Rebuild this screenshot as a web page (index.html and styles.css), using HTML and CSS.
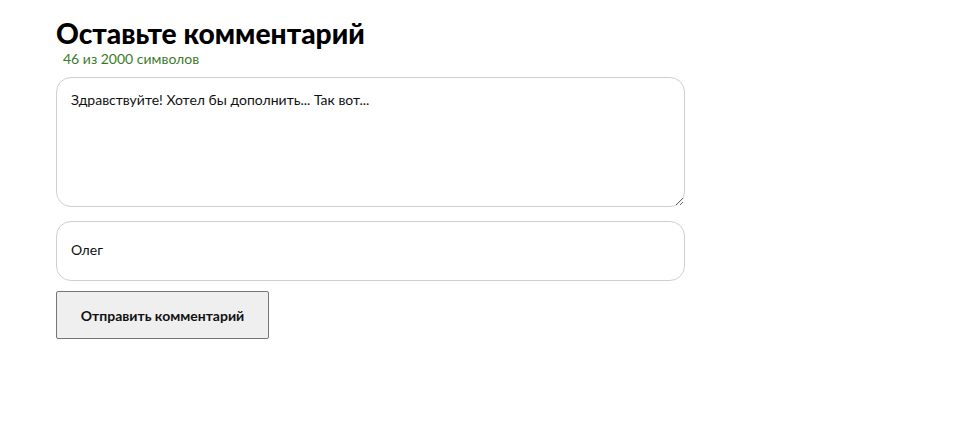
FILE: index.html
```html
<!DOCTYPE html>
<html lang="ru">
<head>
<meta charset="utf-8">
<title>Оставьте комментарий</title>
<link rel="stylesheet" href="styles.css">
</head>
<body>
<form class="comment-form">
  <h2 class="title">Оставьте комментарий</h2>
  <div class="counter">46 из 2000 символов</div>
  <textarea class="field field--text">Здравствуйте! Хотел бы дополнить... Так вот...</textarea>
  <input class="field field--name" type="text" value="Олег">
  <button class="submit" type="button">Отправить комментарий</button>
</form>
</body>
</html>
```

FILE: styles.css
```css
html, body {
  margin: 0;
  padding: 0;
  background: #fff;
}
body {
  font-family: Lato, "Open Sans", sans-serif;
  color: #111;
}
.comment-form {
  display: flex;
  flex-direction: column;
  align-items: flex-start;
  width: 629px;
  padding: 17px 0 0 56px;
}
.title {
  margin: 0;
  font-size: 28.2px;
  font-weight: 900;
  line-height: 33px;
  color: #000;
}
.counter {
  margin: 0 0 10px 7px;
  font-size: 14px;
  line-height: 17px;
  color: #3b7a2c;
}
.field {
  box-sizing: border-box;
  width: 629px;
  border: 1px solid #cfcfcf;
  border-radius: 15px;
  font-family: Lato, "Open Sans", sans-serif;
  font-size: 14px;
  color: #111;
  background: #fff;
  outline: none;
}
.field--text {
  height: 130px;
  padding: 13px 14px;
  line-height: 17px;
  resize: vertical;
}
.field--name {
  height: 60px;
  margin-top: 14px;
  padding: 0 14px 4px;
}
.submit {
  box-sizing: border-box;
  margin-top: 10px;
  width: 213px;
  height: 48px;
  padding-bottom: 1px;
  background: #efefef;
  border: 1px solid #767676;
  border-radius: 2px;
  font-family: Lato, "Open Sans", sans-serif;
  font-size: 14px;
  font-weight: 700;
  color: #111;
}
```
